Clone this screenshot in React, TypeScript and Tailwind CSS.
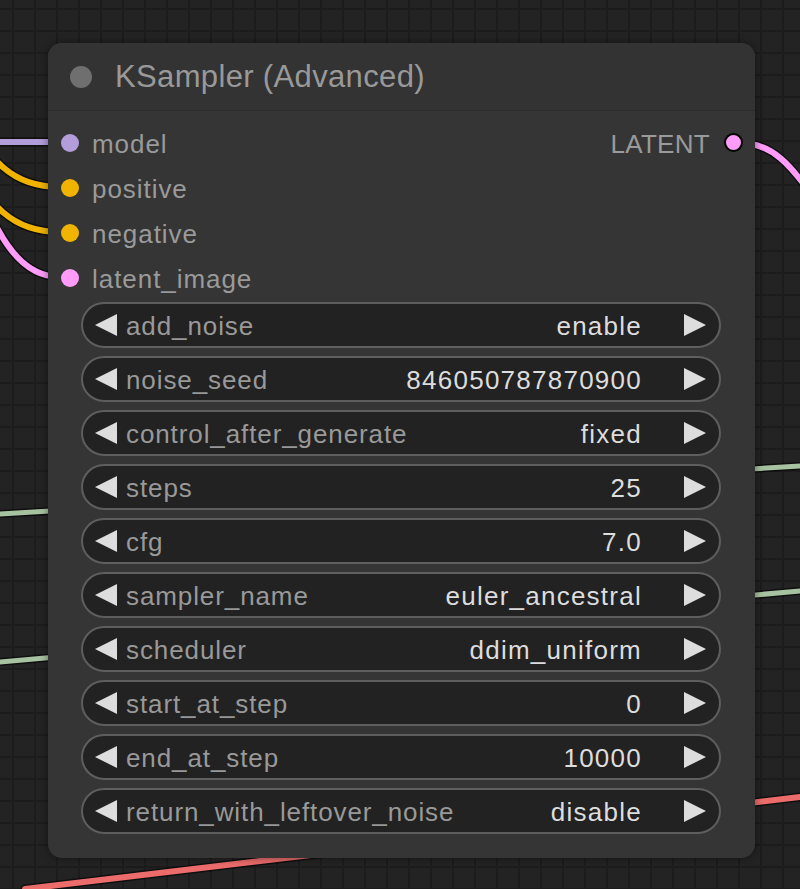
import React from "react";

const widgets: [string, string][] = [
  ["add_noise", "enable"],
  ["noise_seed", "846050787870900"],
  ["control_after_generate", "fixed"],
  ["steps", "25"],
  ["cfg", "7.0"],
  ["sampler_name", "euler_ancestral"],
  ["scheduler", "ddim_uniform"],
  ["start_at_step", "0"],
  ["end_at_step", "10000"],
  ["return_with_leftover_noise", "disable"],
];

const inputs: [string, string][] = [
  ["model", "bg-[#b39ddb]"],
  ["positive", "bg-[#f0b400]"],
  ["negative", "bg-[#f0b400]"],
  ["latent_image", "bg-[#ff9cf9]"],
];

function Wire({ d, color, w = 6 }: { d: string; color: string; w?: number }) {
  return (
    <g fill="none" strokeLinecap="round">
      <path d={d} stroke="rgba(0,0,0,0.55)" strokeWidth={w + 3} />
      <path d={d} stroke={color} strokeWidth={w} />
    </g>
  );
}

function Arrow({ dir }: { dir: "left" | "right" }) {
  return (
    <svg width="22" height="22" viewBox="0 0 22 22" className="shrink-0">
      {dir === "left" ? (
        <polygon points="22,0 22,22 0,11" fill="#dddddd" />
      ) : (
        <polygon points="0,0 0,22 22,11" fill="#dddddd" />
      )}
    </svg>
  );
}

export default function App() {
  return (
    <div className="relative w-[800px] h-[889px] overflow-hidden bg-[#232323] bg-[image:linear-gradient(to_right,#1c1c1c_2px,transparent_2px),linear-gradient(to_bottom,#1c1c1c_2px,transparent_2px)] bg-[size:22px_22px] bg-[position:12px_8px] font-[family-name:Liberation_Sans,Arial,sans-serif] pt-[43px] pl-[48px]">
      <svg className="absolute inset-0" width="800" height="889" viewBox="0 0 800 889">
        <Wire d="M0 514 L800 466" color="#a7c2a0" w={5} />
        <Wire d="M0 662 L800 591" color="#a7c2a0" w={5} />
        <Wire d="M25 889 L800 797" color="#ec6c6c" />
        <Wire d="M-10 142 L60 142" color="#b39ddb" />
        <Wire d="M-40 112 C -8 160, 10 187, 60 187" color="#f0b400" />
        <Wire d="M-40 157 C -8 205, 10 232, 60 232" color="#f0b400" />
        <Wire d="M-30 168 C -5 228, 15 277, 60 277" color="#ff9cf9" />
        <Wire d="M740 143 C 770 143, 790 160, 825 215" color="#ff9cf9" />
      </svg>

      <div className="relative z-10 w-[707px] h-[815px] rounded-[14px] bg-[#353535] shadow-[0_0_8px_rgba(0,0,0,0.45)] flex flex-col">
        <div className="h-[68px] shrink-0 flex items-center pl-[22px] border-b border-[#2c2c2c] rounded-t-[14px] bg-[#333333]">
          <div className="w-[22px] h-[22px] rounded-full bg-[#6f6f6f]" />
          <span className="ml-[23px] text-[31px] tracking-[0.35px] text-[#999999] leading-none">
            KSampler (Advanced)
          </span>
        </div>

        <div className="pt-[9px] flex">
          <div className="flex-1 flex flex-col">
            {inputs.map(([name, color]) => (
              <div key={name} className="h-[45px] flex items-center pl-[13px]">
                <div className={`w-[18px] h-[18px] rounded-full ${color}`} />
                <span className="ml-[13px] pt-[3px] text-[26px] tracking-[0.95px] text-[#9a9a9a] leading-none">
                  {name}
                </span>
              </div>
            ))}
          </div>
          <div className="flex flex-col">
            <div className="h-[45px] flex items-center pr-[12px]">
              <span className="pt-[2px] text-[26px] tracking-[0.3px] text-[#9a9a9a] leading-none">LATENT</span>
              <div className="ml-[14px] w-[19px] h-[19px] rounded-full bg-[#ff9cf9] border-2 border-black" />
            </div>
          </div>
        </div>

        <div className="pt-[2px] pl-[33px] pr-[34px] flex flex-col gap-[8px]">
          {widgets.map(([label, value]) => (
            <div
              key={label}
              className="h-[46px] rounded-full border-2 border-[#5e5e5e] bg-[#222222] flex items-center pl-[12px] pr-[13px]"
            >
              <Arrow dir="left" />
              <span className="ml-[9px] flex-1 pt-[1px] text-[26px] tracking-[0.9px] text-[#999999] leading-none whitespace-nowrap">
                {label}
              </span>
              <span className="pt-[1px] text-[26px] tracking-[1.25px] text-[#dddddd] leading-none whitespace-nowrap">
                {value}
              </span>
              <div className="w-[42px]" />
              <Arrow dir="right" />
            </div>
          ))}
        </div>
      </div>
    </div>
  );
}
